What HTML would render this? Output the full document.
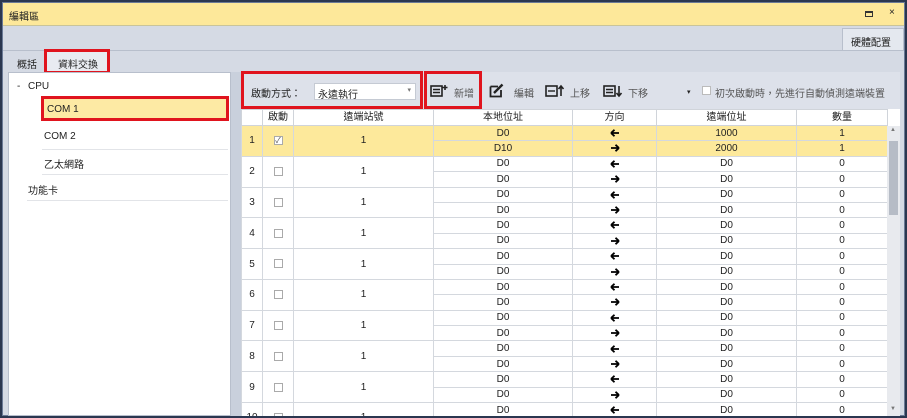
<!DOCTYPE html>
<html><head><meta charset="utf-8"><style>
*{box-sizing:border-box;margin:0;padding:0}
body{width:907px;height:418px;overflow:hidden;background:#2b3750;font-family:"Liberation Sans","Noto Sans CJK TC",sans-serif;font-size:10px;color:#222;position:relative}
.abs{position:absolute}
#win{left:2px;top:2px;width:903px;height:414px;background:#d5dae4;border:1px solid #6b7a96}
#title{left:0;top:0;width:901px;height:23px;background:#fde89a;border-bottom:1px solid #c9c49a}
.red{border:3px solid #e0141e}
table{border-collapse:collapse;table-layout:fixed;position:absolute}
td{border:1px solid #d4d8de;text-align:center;font-size:10px;height:15.4px;padding:0;line-height:13px;overflow:hidden}
th{font-weight:normal;border:1px solid #d0d4da;background:#fff;height:16px;font-size:10px;line-height:13px;padding:0}
.y td{background:#fde99b}
.cb{display:inline-block;width:9px;height:9px;border:1px solid #aaa;background:#fff;vertical-align:middle;font-size:8px;line-height:7px;color:#555}
.tree{position:absolute;font-size:10px}
.sep{position:absolute;height:1px;background:#e2e4e8}
svg.a{width:10px;height:8px;vertical-align:middle}
</style></head><body>
<svg width="0" height="0" style="position:absolute"><defs>
<symbol id="l" viewBox="0 0 10 8"><path d="M1 4H9M1 4L4.5 0.8M1 4L4.5 7.2" stroke="#000" stroke-width="1.8" fill="none"/></symbol>
<symbol id="r" viewBox="0 0 10 8"><path d="M1 4H9M9 4L5.5 0.8M9 4L5.5 7.2" stroke="#000" stroke-width="1.8" fill="none"/></symbol>
</defs></svg>
<div id="win" class="abs">
 <div id="title" class="abs"><span class="abs" style="left:6px;top:5px;font-size:10px">編輯區</span>
  <span class="abs" style="left:862px;top:8px;width:8px;height:6px;border:1px solid #333;border-top-width:2px"></span><span class="abs" style="left:886px;top:4px;font-size:10px">×</span></div>
 <div class="abs" style="left:839px;top:25px;width:62px;height:23px;background:#e4e8ef;border:1px solid #b8bfcc;border-bottom:none;font-size:10px;padding:5px 0 0 8px">硬體配置</div>
 <div class="abs" style="left:0;top:47px;width:901px;height:1px;background:#b8bfcc"></div>
 <span class="abs" style="left:14px;top:53px">概括</span>
 <div class="abs red" style="left:41px;top:46px;width:66px;height:25px;background:#e8ebf1;padding:4px 0 0 11px">資料交換</div>
 <div class="abs" style="left:5px;top:69px;width:223px;height:344px;background:#fff;border:1px solid #b8bfcc"></div>
 <span class="tree" style="left:14px;top:78px">-</span>
 <span class="tree" style="left:25px;top:78px">CPU</span>
 <div class="sep" style="left:39px;top:95px;width:186px"></div>
 <div class="abs red" style="left:38px;top:93px;width:188px;height:25px;background:#fdeaa4;padding:5px 0 0 3px;font-size:10px">COM 1</div>
 <span class="tree" style="left:41px;top:128px">COM 2</span>
 <div class="sep" style="left:39px;top:146px;width:186px"></div>
 <span class="tree" style="left:41px;top:153px">乙太網路</span>
 <div class="sep" style="left:39px;top:171px;width:186px"></div>
 <span class="tree" style="left:25px;top:179px">功能卡</span>
 <div class="sep" style="left:24px;top:197px;width:201px"></div>
 <div class="abs" style="left:228px;top:69px;width:10px;height:344px;background:#c9d0dc"></div>
 <div class="abs" style="left:238px;top:69px;width:659px;height:37px;background:#dde1ea"></div>
 <div class="abs red" style="left:238px;top:68px;width:182px;height:38px"></div>
 <span class="abs" style="left:248px;top:82px">啟動方式：</span>
 <div class="abs" style="left:311px;top:80px;width:102px;height:17px;background:#fff;border:1px solid #c5cad3;padding:2px 0 0 3px">永遠執行<span class="abs" style="right:4px;top:2px;font-size:7px;color:#777">▾</span></div>
 <div class="abs red" style="left:421px;top:68px;width:58px;height:38px"></div>
 <svg class="abs" style="left:427px;top:81px" width="18" height="14" viewBox="0 0 18 14"><rect x="1" y="2" width="11" height="10" fill="none" stroke="#222" stroke-width="1.6"/><path d="M3 5.5H10M3 8.5H10" stroke="#222" stroke-width="1.4"/><path d="M15 1V6M12.5 3.5H17.5" stroke="#222" stroke-width="1.6"/></svg>
 <span class="abs" style="left:451px;top:82px;color:#555">新增</span>
 <svg class="abs" style="left:486px;top:80px" width="16" height="15" viewBox="0 0 16 15"><path d="M1.5 3.5H9M1.5 3.5V13.5H12V7" fill="none" stroke="#222" stroke-width="1.8"/><path d="M5 10L13.5 1.5" stroke="#222" stroke-width="2.4"/></svg>
 <span class="abs" style="left:511px;top:82px;color:#555">編輯</span>
 <svg class="abs" style="left:542px;top:81px" width="20" height="14" viewBox="0 0 20 14"><rect x="1" y="2" width="11" height="10" fill="none" stroke="#222" stroke-width="1.6"/><path d="M3 7H10" stroke="#222" stroke-width="1.4"/><path d="M16 12V2.5M13.5 5L16 2L18.5 5" fill="none" stroke="#222" stroke-width="1.6"/></svg>
 <span class="abs" style="left:567px;top:82px;color:#555">上移</span>
 <svg class="abs" style="left:600px;top:81px" width="20" height="14" viewBox="0 0 20 14"><rect x="1" y="2" width="11" height="10" fill="none" stroke="#222" stroke-width="1.6"/><path d="M3 5.5H10M3 8.5H10" stroke="#222" stroke-width="1.4"/><path d="M16 2V11.5M13.5 9L16 12L18.5 9" fill="none" stroke="#222" stroke-width="1.6"/></svg>
 <span class="abs" style="left:625px;top:82px;color:#555">下移</span>
 <span class="abs" style="left:684px;top:85px;font-size:7px">▾</span>
 <span class="abs" style="left:699px;top:83px;width:9px;height:9px;background:#fff;border:1px solid #bbb"></span>
 <span class="abs" style="left:712px;top:82px;color:#555">初次啟動時，先進行自動偵測遠端裝置</span>
 <div class="abs" style="left:238px;top:106px;width:659px;height:307px;background:#fff;overflow:hidden">
 <table style="left:0;top:0;width:646px">
  <colgroup><col style="width:21px"><col style="width:31px"><col style="width:140px"><col style="width:139px"><col style="width:84px"><col style="width:140px"><col style="width:91px"></colgroup>
  <tr><th></th><th>啟動</th><th>遠端站號</th><th>本地位址</th><th>方向</th><th>遠端位址</th><th>數量</th></tr>
  <tr class="y"><td rowspan="2">1</td><td rowspan="2"><span class="cb">✓</span></td><td rowspan="2">1</td><td>D0</td><td><svg class="a"><use href="#l"/></svg></td><td>1000</td><td>1</td></tr>
  <tr class="y"><td>D10</td><td><svg class="a"><use href="#r"/></svg></td><td>2000</td><td>1</td></tr>
  <tr><td rowspan="2">2</td><td rowspan="2"><span class="cb"></span></td><td rowspan="2">1</td><td>D0</td><td><svg class="a"><use href="#l"/></svg></td><td>D0</td><td>0</td></tr><tr><td>D0</td><td><svg class="a"><use href="#r"/></svg></td><td>D0</td><td>0</td></tr>
  <tr><td rowspan="2">3</td><td rowspan="2"><span class="cb"></span></td><td rowspan="2">1</td><td>D0</td><td><svg class="a"><use href="#l"/></svg></td><td>D0</td><td>0</td></tr><tr><td>D0</td><td><svg class="a"><use href="#r"/></svg></td><td>D0</td><td>0</td></tr>
  <tr><td rowspan="2">4</td><td rowspan="2"><span class="cb"></span></td><td rowspan="2">1</td><td>D0</td><td><svg class="a"><use href="#l"/></svg></td><td>D0</td><td>0</td></tr><tr><td>D0</td><td><svg class="a"><use href="#r"/></svg></td><td>D0</td><td>0</td></tr>
  <tr><td rowspan="2">5</td><td rowspan="2"><span class="cb"></span></td><td rowspan="2">1</td><td>D0</td><td><svg class="a"><use href="#l"/></svg></td><td>D0</td><td>0</td></tr><tr><td>D0</td><td><svg class="a"><use href="#r"/></svg></td><td>D0</td><td>0</td></tr>
  <tr><td rowspan="2">6</td><td rowspan="2"><span class="cb"></span></td><td rowspan="2">1</td><td>D0</td><td><svg class="a"><use href="#l"/></svg></td><td>D0</td><td>0</td></tr><tr><td>D0</td><td><svg class="a"><use href="#r"/></svg></td><td>D0</td><td>0</td></tr>
  <tr><td rowspan="2">7</td><td rowspan="2"><span class="cb"></span></td><td rowspan="2">1</td><td>D0</td><td><svg class="a"><use href="#l"/></svg></td><td>D0</td><td>0</td></tr><tr><td>D0</td><td><svg class="a"><use href="#r"/></svg></td><td>D0</td><td>0</td></tr>
  <tr><td rowspan="2">8</td><td rowspan="2"><span class="cb"></span></td><td rowspan="2">1</td><td>D0</td><td><svg class="a"><use href="#l"/></svg></td><td>D0</td><td>0</td></tr><tr><td>D0</td><td><svg class="a"><use href="#r"/></svg></td><td>D0</td><td>0</td></tr>
  <tr><td rowspan="2">9</td><td rowspan="2"><span class="cb"></span></td><td rowspan="2">1</td><td>D0</td><td><svg class="a"><use href="#l"/></svg></td><td>D0</td><td>0</td></tr><tr><td>D0</td><td><svg class="a"><use href="#r"/></svg></td><td>D0</td><td>0</td></tr>
  <tr><td rowspan="2">10</td><td rowspan="2"><span class="cb"></span></td><td rowspan="2">1</td><td>D0</td><td><svg class="a"><use href="#l"/></svg></td><td>D0</td><td>0</td></tr><tr><td>D0</td><td><svg class="a"><use href="#r"/></svg></td><td>D0</td><td>0</td></tr>
 </table>
 <div class="abs" style="left:646px;top:17px;width:13px;height:290px;background:#e8eaee"></div>
 <div class="abs" style="left:648px;top:32px;width:9px;height:74px;background:#b6bcc6"></div>
 <span class="abs" style="left:649px;top:18px;font-size:6px;color:#777">▲</span>
 <span class="abs" style="left:649px;top:297px;font-size:6px;color:#777">▼</span>
 </div>
</div>
</body></html>
